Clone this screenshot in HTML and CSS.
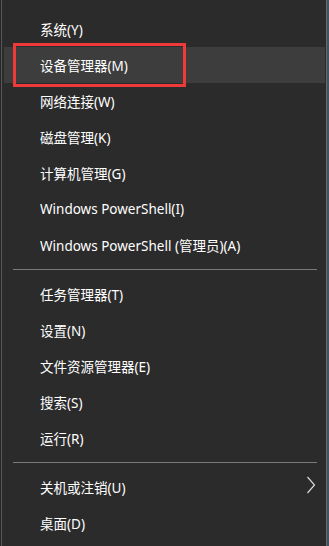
FILE: index.html
```html
<!DOCTYPE html>
<html lang="zh-CN">
<head>
<meta charset="utf-8">
<link rel="stylesheet" href="styles.css">
</head>
<body>
<div class="menu">
  <div class="group top">
    <div class="item">系统(Y)</div>
    <div class="item hover">设备管理器(M)<span class="mark"></span></div>
    <div class="item">网络连接(W)</div>
    <div class="item">磁盘管理(K)</div>
    <div class="item">计算机管理(G)</div>
    <div class="item">Windows PowerShell(I)</div>
    <div class="item">Windows PowerShell (管理员)(A)</div>
  </div>
  <div class="sep"></div>
  <div class="group">
    <div class="item">任务管理器(T)</div>
    <div class="item">设置(N)</div>
    <div class="item">文件资源管理器(E)</div>
    <div class="item">搜索(S)</div>
    <div class="item">运行(R)</div>
  </div>
  <div class="sep"></div>
  <div class="group">
    <div class="item sub">关机或注销(U)
      <svg class="chev" width="10" height="18" viewBox="0 0 10 18"><polyline points="1.5,1 8.5,9 1.5,17" fill="none" stroke="#d8d8d8" stroke-width="1.2"/></svg>
    </div>
    <div class="item">桌面(D)</div>
  </div>
</div>
</body>
</html>
```
FILE: styles.css
```css
html, body {
  margin: 0;
  padding: 0;
  background: #3c5566;
}
body {
  width: 329px;
  height: 546px;
  overflow: hidden;
}
.menu {
  box-sizing: border-box;
  width: 327px;
  height: 546px;
  background: #2b2b2b;
  border-left: 1px solid #262626;
  border-right: 1px solid #6a6a6a;
  box-shadow: inset 1px 0 0 #585858;
  padding-top: 11px;
  font-family: "Noto Sans", "Noto Sans CJK SC", sans-serif;
  font-size: 13.5px;
  color: #ffffff;
}
.item {
  position: relative;
  height: 36px;
  display: flex;
  align-items: center;
  margin: 0 1px 0 3px;
  padding-left: 36px;
}
.item.hover {
  background: #3d3d3d;
}
.mark {
  position: absolute;
  left: 9px;
  top: -4px;
  width: 173px;
  height: 44px;
  box-sizing: border-box;
  border: 3px solid #f03a3a;
}
.sep {
  height: 1px;
  background: #7a7a7a;
  margin: 6px 9px 6px 12px;
}
.chev {
  position: absolute;
  right: 9px;
  top: 7px;
}
```
